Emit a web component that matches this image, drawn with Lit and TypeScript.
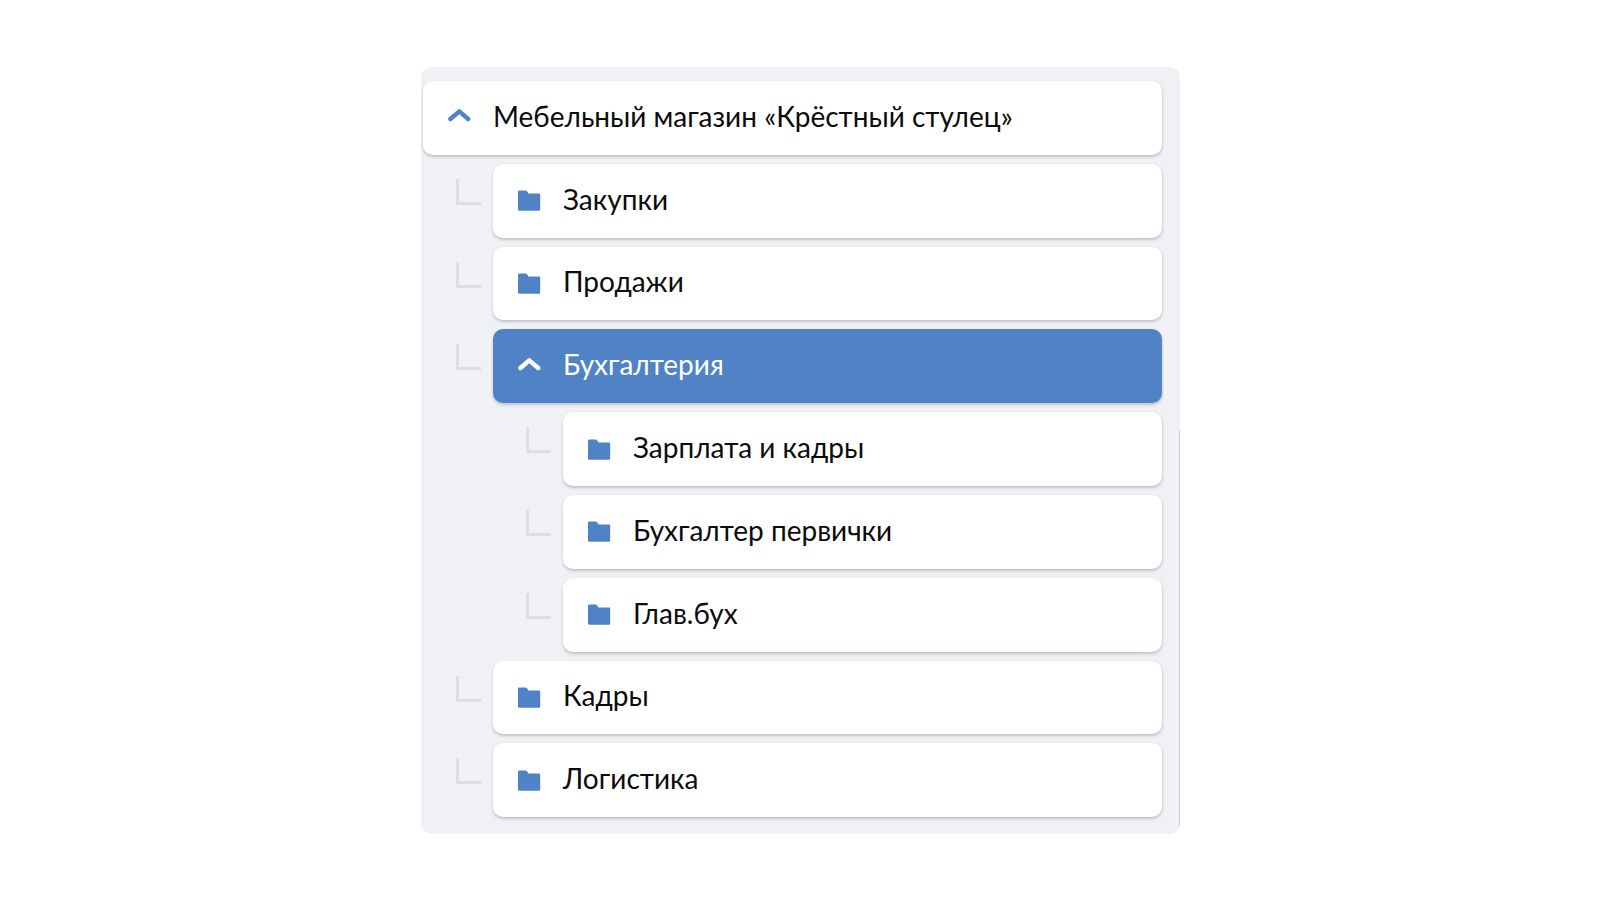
import { LitElement, html, css, svg } from "lit";
import { customElement } from "lit/decorators.js";

interface Node { label: string; open?: boolean; active?: boolean; children?: Node[]; }

const tree: Node = {
  label: "Мебельный магазин «Крёстный стулец»",
  open: true,
  children: [
    { label: "Закупки" },
    { label: "Продажи" },
    {
      label: "Бухгалтерия",
      open: true,
      active: true,
      children: [{ label: "Зарплата и кадры" }, { label: "Бухгалтер первички" }, { label: "Глав.бух" }],
    },
    { label: "Кадры" },
    { label: "Логистика" },
  ],
};

const chevron = svg`<path d="M2.4 12 L11.3 4.4 L20.2 12" fill="none" stroke="currentColor" stroke-width="4.4" stroke-linecap="round" stroke-linejoin="round"/>`;
const folder = svg`<path d="M0 2 Q0 0.6 1.4 0.6 L7.6 0.6 Q8.6 0.6 9.2 1.4 L10.6 3.4 L20.8 3.4 Q22.2 3.4 22.2 4.8 L22.2 19.4 Q22.2 20.8 20.8 20.8 L1.4 20.8 Q0 20.8 0 19.4 Z" fill="currentColor"/>`;

@customElement("app-root")
export class AppRoot extends LitElement {
  static styles = css`
    :host {
      display: flex;
      justify-content: center;
      min-height: 900px;
      padding: 67px 0 0 1px;
      box-sizing: border-box;
      background: #fff;
      font-family: "Lato", "Open Sans", sans-serif;
    }
    .panel {
      position: relative;
      box-sizing: border-box;
      width: 759px;
      height: 767px;
      padding: 14px 18px 0 2px;
      background: #eff1f5;
      border-radius: 10px;
    }
    .edge {
      position: absolute;
      right: 0;
      top: 363px;
      bottom: 8px;
      width: 1px;
      background: #c9ccd2;
    }
    .list {
      display: flex;
      flex-direction: column;
      gap: 9px;
    }
    .row {
      display: flex;
      align-items: flex-start;
    }
    .elbow {
      flex: none;
      box-sizing: border-box;
      width: 25px;
      height: 26px;
      margin: 15px 12px 0 33px;
      border-left: 3px solid #dcdee2;
      border-bottom: 3px solid #dcdee2;
    }
    .card {
      display: flex;
      align-items: center;
      box-sizing: border-box;
      height: 73.8px;
      padding-left: 25.4px;
      border-radius: 10px;
      background: #fff;
      color: #0c0c0c;
      box-shadow: 0 2px 3px rgba(60, 66, 80, 0.26), 1px 0 2px rgba(60, 66, 80, 0.06);
    }
    .card.active {
      background: #4f83c6;
      color: #fff;
    }
    .icon {
      flex: none;
      width: 23px;
      height: 21px;
      margin-right: 21.6px;
      color: #4f83c6;
    }
    .active .icon {
      color: #fff;
    }
    .label {
      font-size: 28px;
      line-height: 36px;
      white-space: nowrap;
      transform: translateY(-2.5px);
    }
    .body {
      flex: 1;
      min-width: 0;
      display: flex;
      flex-direction: column;
      gap: 9px;
    }
  `;

  private renderNode(n: Node): unknown {
    return html`
      <div class="card ${n.active ? "active" : ""}">
        <svg class="icon" viewBox="0 0 23 21">${n.children ? chevron : folder}</svg>
        <span class="label">${n.label}</span>
      </div>
      ${n.children
        ? html`<div class="list">
            ${n.children.map(
              (c) => html`<div class="row"><div class="elbow"></div><div class="body">${this.renderNode(c)}</div></div>`
            )}
          </div>`
        : ""}
    `;
  }

  render() {
    return html`<div class="panel"><div class="edge"></div><div class="body">${this.renderNode(tree)}</div></div>`;
  }
}
